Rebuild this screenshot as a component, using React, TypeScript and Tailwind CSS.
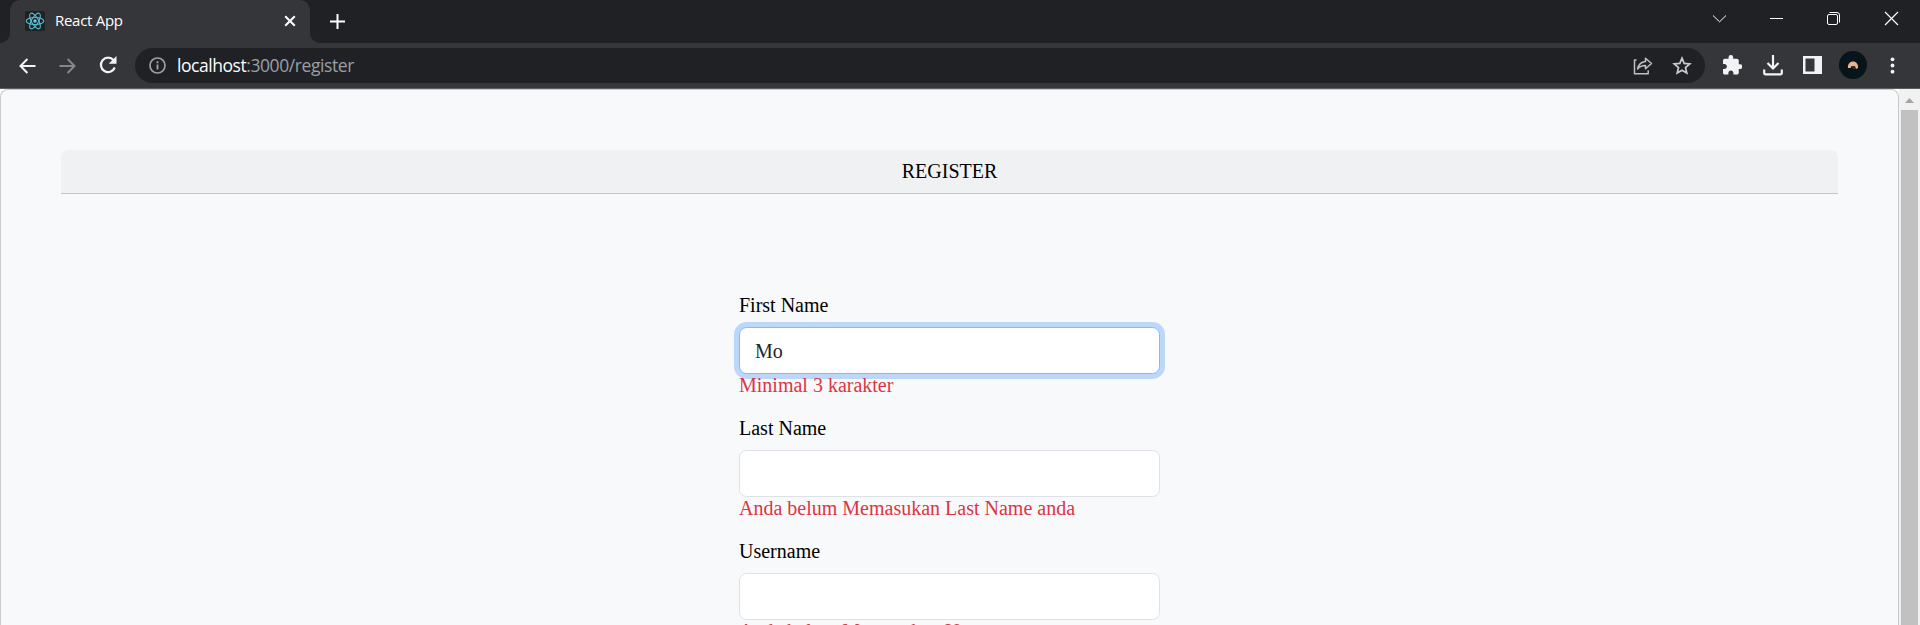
import React from "react";

function ReactLogo() {
  return (
    <span className="flex h-5 w-5 items-center justify-center rounded-[2px] bg-[#202124]">
      <svg width="20" height="20" viewBox="-10 -10 20 20" fill="none" stroke="#58bdd6" strokeWidth="1.100">
        <ellipse rx="8.800" ry="3.500" />
        <ellipse rx="8.800" ry="3.500" transform="rotate(60)" />
        <ellipse rx="8.800" ry="3.500" transform="rotate(120)" />
        <circle r="1.700" fill="#5fd0ea" stroke="none" />
      </svg>
    </span>
  );
}

function TabStrip() {
  return (
    <div className="flex h-[43px] shrink-0 bg-[#202124]">
      <div className="flex w-[10px] items-end bg-[#35363a]">
        <div className="h-full w-full rounded-br-[10px] bg-[#202124]" />
      </div>
      <div className="flex w-[300px] items-center rounded-t-[10px] bg-[#35363a] pb-px pl-[15px] pr-[14px]">
        <ReactLogo />
        <span className="mb-[2px] ml-[10px] flex-1 text-[15px] leading-5 tracking-[-0.28px] text-white">React App</span>
        <svg width="12" height="12" viewBox="0 0 12 12" stroke="#fff" strokeWidth="2">
          <path d="M1.200 1.200 10.800 10.800M10.800 1.200 1.200 10.800" />
        </svg>
      </div>
      <div className="w-[10px] bg-[#35363a]">
        <div className="h-full w-full rounded-bl-[10px] bg-[#202124]" />
      </div>
      <svg className="ml-[10px] mt-[14px]" width="15" height="15" viewBox="0 0 15 15" stroke="#fff" strokeWidth="2">
        <path d="M7.500 0v15M0 7.500h15" />
      </svg>
      <div className="ml-auto flex pt-[11px]">
        <svg className="mr-[42px]" width="15" height="15" viewBox="0 0 15 15" fill="none" stroke="#fff" strokeWidth="1">
          <path d="M1 4.500 7.500 10.800 14 4.500" />
        </svg>
        <svg className="mr-[42px]" width="15" height="15" viewBox="0 0 15 15" fill="none" stroke="#fff" strokeWidth="1">
          <path d="M1 7.500h13" />
        </svg>
        <svg className="mr-[43px]" width="15" height="15" viewBox="0 0 15 15" fill="none" stroke="#fff" strokeWidth="1">
          <rect x="1.500" y="3.500" width="10" height="10" rx="1.500" />
          <path d="M3.500 1.500H11a2.500 2.500 0 0 1 2.500 2.500v7.500" />
        </svg>
        <svg className="mr-[21px]" width="15" height="15" viewBox="0 0 15 15" fill="none" stroke="#fff" strokeWidth="1.200">
          <path d="M1 1 14 14M14 1 1 14" />
        </svg>
      </div>
    </div>
  );
}

function Toolbar() {
  return (
    <div className="flex h-[45px] shrink-0 items-center bg-[#35363a]">
      <svg className="ml-[19px]" width="17" height="16" viewBox="0 0 17 16" fill="none" stroke="#f1f3f4" strokeWidth="2">
        <path d="M16.500 8H1.600M8.400 1 1.500 8l6.900 7" />
      </svg>
      <svg className="ml-[23px]" width="17" height="16" viewBox="0 0 17 16" fill="none" stroke="#86878a" strokeWidth="2">
        <path d="M.5 8h14.900M8.600 1l6.900 7-6.900 7" />
      </svg>
      <svg className="mb-px ml-[23px]" width="18" height="18" viewBox="0 0 18 18">
        <path d="M14.600 4.200A7.200 7.200 0 1 0 15.800 11.500" fill="none" stroke="#f1f3f4" strokeWidth="2.200" />
        <path d="M17.500 0v7.800H9.700z" fill="#f1f3f4" />
      </svg>
      <div className="ml-[18px] flex h-[35px] w-[1570px] items-center rounded-full bg-[#202124] pl-[14px] pr-[13px]">
        <svg width="17" height="17" viewBox="0 0 17 17" fill="none" stroke="#9aa0a6">
          <circle cx="8.500" cy="8.500" r="7.500" strokeWidth="1.700" />
          <path d="M8.500 7.500v5M8.500 4.200v2" strokeWidth="1.900" />
        </svg>
        <span className="mb-[2px] ml-[11px] flex-1 whitespace-nowrap text-[17.500px] leading-6 text-[#9aa0a6]">
          <span className="tracking-[-0.450px] text-white">localhost</span>
          <span className="tracking-[-0.420px]">:3000/register</span>
        </span>
        <svg width="20" height="18" viewBox="0 0 20 18" fill="none" stroke="#bdc1c6" strokeWidth="1.500" strokeLinejoin="round">
          <path d="M3.500 3H1.500v13.800h13.700v-3.500" />
          <path d="M12.500 1.300 18.500 6.500l-6 5.200V8.600C9 8.500 6.700 9.500 4.600 12c.6-4 3.200-7 7.900-7.600z" />
        </svg>
        <svg className="ml-[19px]" width="20" height="19" viewBox="0 0 20 19" fill="none" stroke="#c9cccf" strokeWidth="1.700">
          <path d="m10 2.200 2.200 5.200 5.600.5-4.300 3.700 1.300 5.500L10 14.200l-4.800 2.900 1.300-5.500-4.300-3.700 5.600-.5z" />
        </svg>
      </div>
      <svg className="mb-px ml-[18px]" width="19" height="20" viewBox="2 1.500 20.500 20.500" fill="#f1f3f4">
        <path d="M20.500 11H19V7c0-1.100-.9-2-2-2h-4V3.500a2.500 2.500 0 0 0-5 0V5H4c-1.100 0-1.990.9-1.990 2v3.800H3.500c1.490 0 2.700 1.210 2.700 2.700s-1.210 2.700-2.700 2.700H2V20c0 1.100.9 2 2 2h3.800v-1.500c0-1.490 1.210-2.700 2.700-2.700s2.700 1.210 2.700 2.700V22H17c1.100 0 2-.9 2-2v-4h1.500a2.500 2.500 0 0 0 0-5z" />
      </svg>
      <svg className="mb-px ml-[21px]" width="20" height="21" viewBox="0 0 20 21" fill="none" stroke="#f1f3f4" strokeWidth="2.200">
        <path d="M10 0v13M4.500 8 10 13.500 15.500 8M1.200 14.500v3.300q0 1.500 1.500 1.500h14.600q1.500 0 1.500-1.500v-3.300" />
      </svg>
      <svg className="mb-px ml-5" width="19" height="18" viewBox="0 0 19 18">
        <path fillRule="evenodd" fill="#f1f3f4" d="M0 0h19v18H0zM2.500 2.500v13h9v-13z" />
      </svg>
      <span className="mb-px ml-[17px] flex h-7 w-7 items-center justify-center rounded-full bg-[#07151b]">
        <svg width="12" height="9" viewBox="0 0 12 9">
          <path d="M1 7C.5 3 3 .5 6 .5S11.500 3 11 7L9 8 7.500 5.500 5 5 3.500 7z" fill="#e3b592" />
          <path d="M4 5h4l1 3H6z" fill="#3c2a22" />
        </svg>
      </span>
      <svg className="mb-px ml-[23px]" width="5" height="17" viewBox="0 0 5 17" fill="#f1f3f4">
        <circle cx="2.500" cy="2.300" r="1.900" />
        <circle cx="2.500" cy="8.500" r="1.900" />
        <circle cx="2.500" cy="14.700" r="1.900" />
      </svg>
    </div>
  );
}

type FieldProps = { label: string; value?: string; error: string; focused?: boolean };

function Field({ label, value = "", error, focused = false }: FieldProps) {
  return (
    <div className="flex h-[123px] flex-col">
      <label className="mb-[7px] text-[20px] leading-[30px] text-black">{label}</label>
      <input
        readOnly
        value={value}
        className={
          focused
            ? "h-[47px] w-full shrink-0 rounded-[7.500px] border border-[#86b7fe] bg-white px-[15px] pt-px text-[20px] text-[#212529] shadow-[0_0_0_5px_#bdd7fb] outline-none"
            : "h-[47px] w-full shrink-0 rounded-[7.500px] border border-[#dee2e6] bg-white px-[15px] pt-px text-[20px] text-[#212529] outline-none"
        }
      />
      <p className="z-10 -mt-[4px] text-[20px] leading-[30px] text-[#dc3545]">{error}</p>
    </div>
  );
}

export default function App() {
  return (
    <div className="flex h-[625px] w-full flex-col overflow-hidden bg-white font-['Open_Sans','Noto_Sans',sans-serif]">
      <TabStrip />
      <Toolbar />
      <div className="h-px shrink-0 bg-[#5c5d60]" />
      <div className="flex min-h-0 flex-1">
        <main className="min-w-0 flex-1 overflow-hidden rounded-t-[8px] border border-b-0 border-[#c9cacb] bg-[#f8f9fb] px-[60px] pt-[60px] font-['Liberation_Serif',serif]">
          <h1 className="h-11 rounded-t-[7px] border-b border-[#c4c5c6] bg-[#f0f1f3] text-center text-[20px] leading-[43px] text-black">
            REGISTER
          </h1>
          <form className="ml-[678px] mt-[96px] w-[421px]">
            <Field label="First Name" value="Mo" error="Minimal 3 karakter" focused />
            <Field label="Last Name" error="Anda belum Memasukan Last Name anda" />
            <Field label="Username" error="Anda belum Memasukan Username" />
          </form>
        </main>
        <div className="flex w-[21px] flex-col items-center bg-[#f1f1f1]">
          <div className="flex h-[21px] items-center justify-center pt-[2px]">
            <svg width="9" height="5" viewBox="0 0 9 5">
              <path d="M4.500 0 9 5H0z" fill="#a3a3a3" />
            </svg>
          </div>
          <div className="w-[17px] flex-1 bg-[#c1c1c1]" />
        </div>
      </div>
    </div>
  );
}
